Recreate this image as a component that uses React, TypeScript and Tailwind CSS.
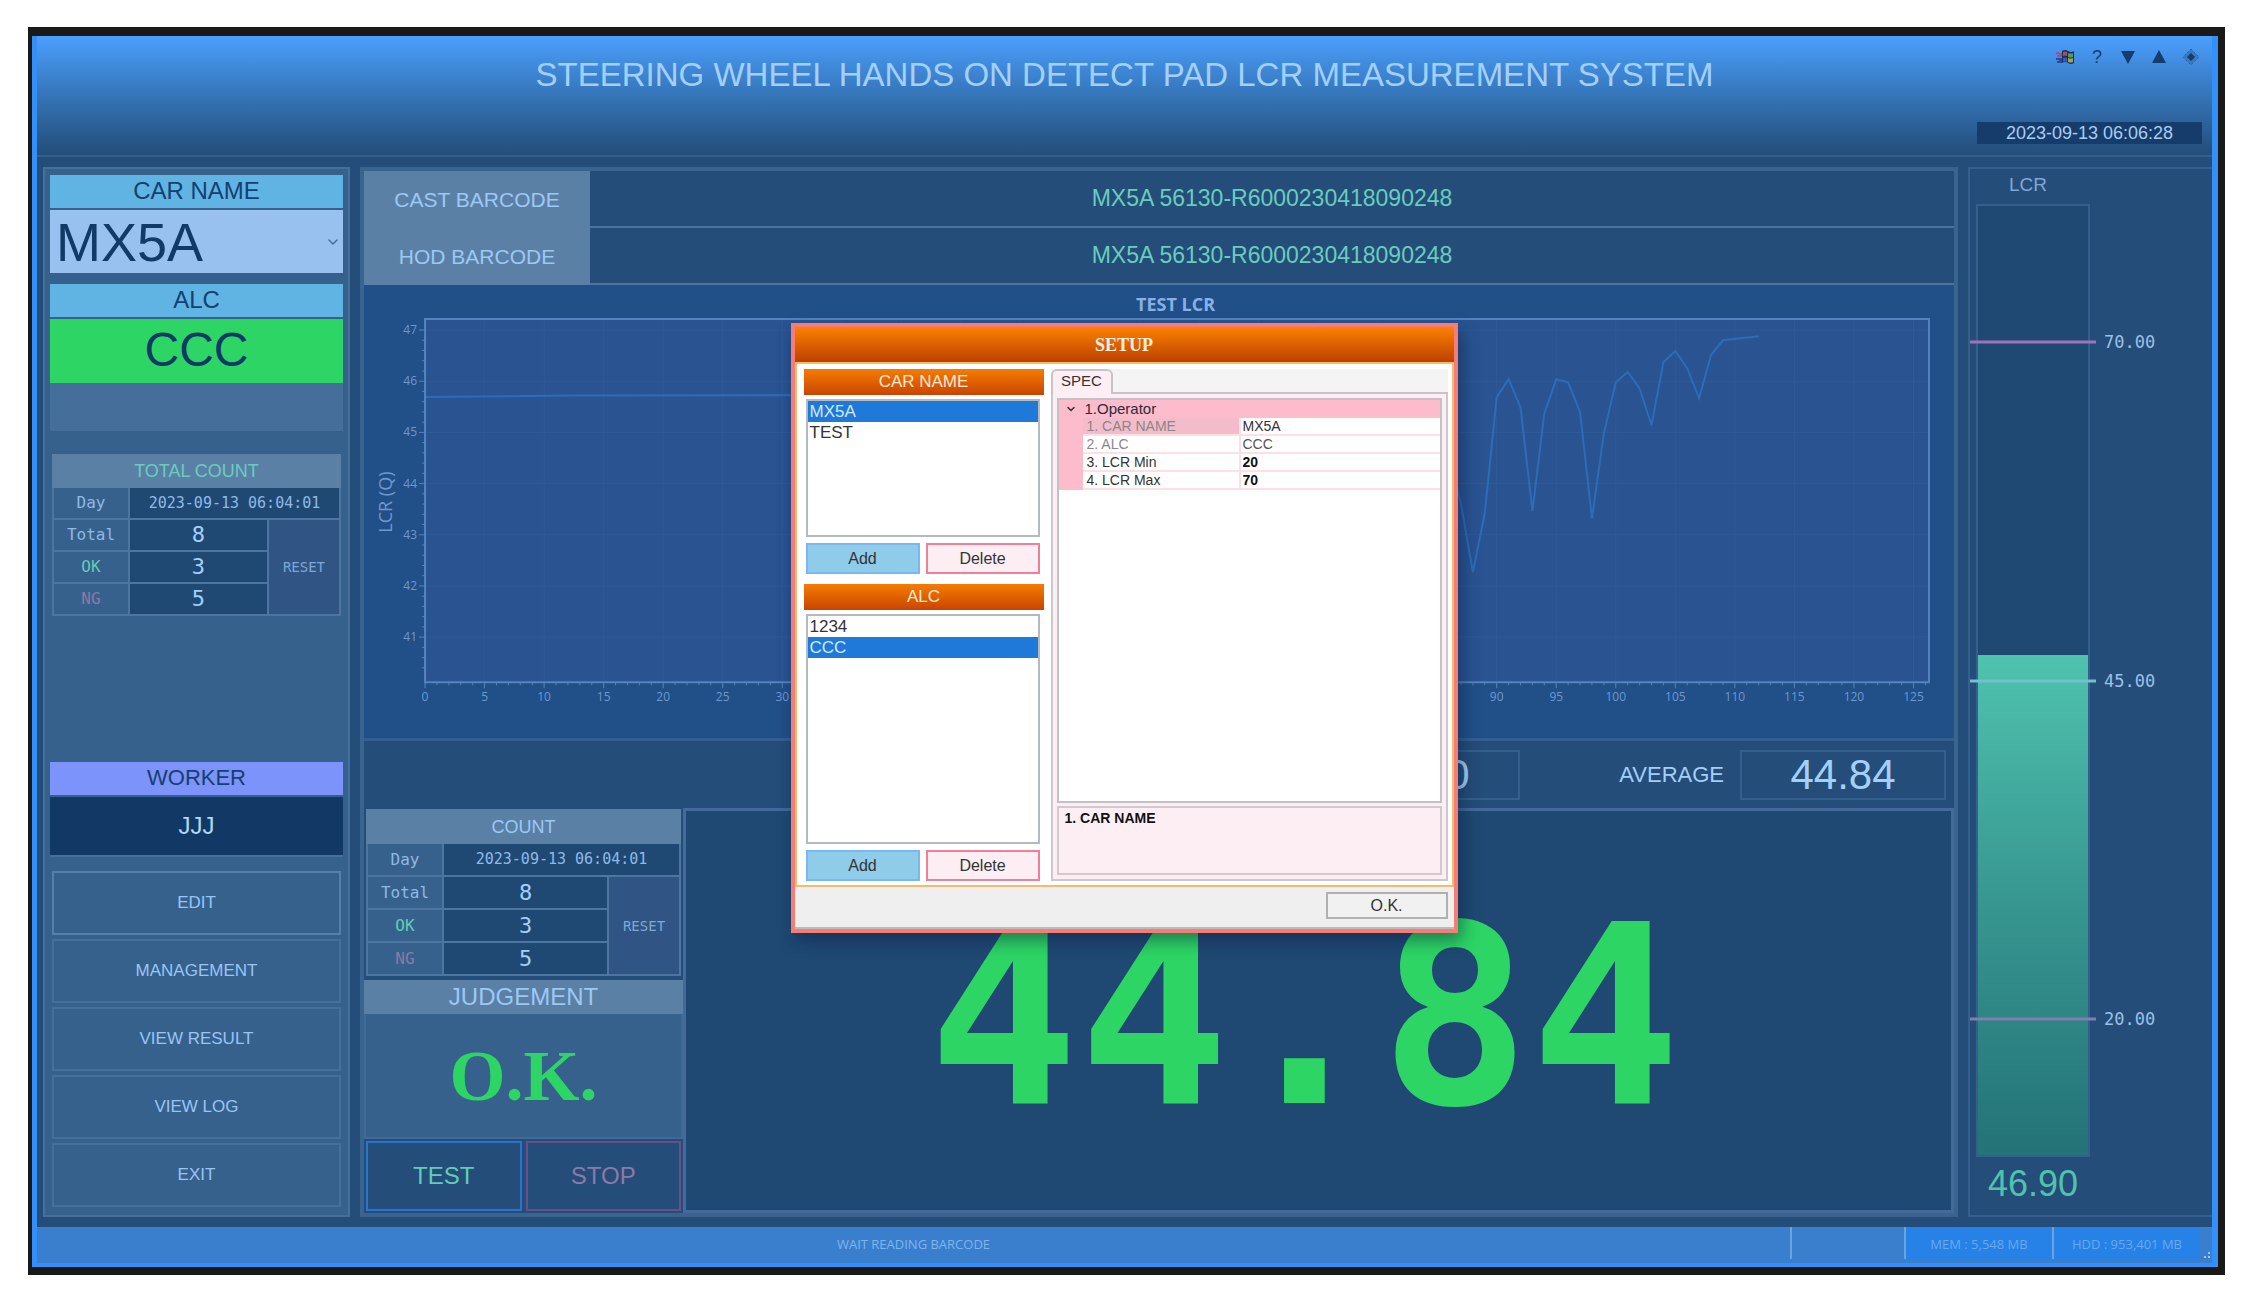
import { FC, ReactNode, useState } from "react";
import { ChevronDown } from "lucide-react";
import { clsx } from "clsx";

// LCR samples: [index, value]
const samples: [number, number][] = [
  [0, 45.69], [12, 45.72], [40, 45.73], [84, 45.73], [86, 44.6], [87, 43.6],
  [88, 42.27], [89, 43.42], [90, 45.69], [91, 46.04], [92, 45.49], [93, 43.46],
  [94, 45.37], [95, 46.04], [96, 45.98], [97, 45.39], [98, 43.32], [99, 44.98],
  [100, 45.98], [101, 46.18], [102, 45.86], [103, 45.14], [104, 46.37],
  [105, 46.59], [106, 46.25], [107, 45.67], [108, 46.51], [109, 46.8], [112, 46.88],
];

const plot = { left: 61, right: 1564, top: 32, bottom: 395 };
const xAt = (n: number) => plot.left + n * 11.9;
const yAt = (v: number) => 43 + (47 - v) * 51.15;

const steps = (from: number, to: number, by: number) => {
  const out: number[] = [];
  for (let i = from; i <= to; i += by) out.push(i);
  return out;
};

/** Line chart of the running test */
const Chart: FC = () => (
  <svg viewBox="0 0 1589 451" className="block w-full h-auto font-['Open_Sans',sans-serif]">
    <text x="811" y="24" fontSize="18" fontWeight="700" fill="#86b0e6" textAnchor="middle">
      TEST LCR
    </text>
    <rect x={plot.left} y={plot.top} width={plot.right - plot.left} height={plot.bottom - plot.top} fill="#295391" />
    {/* Grid */}
    {steps(5, 125, 5).map((n) => (
      <line key={n} x1={xAt(n)} x2={xAt(n)} y1={plot.top} y2={plot.bottom} stroke="#2e5a97" />
    ))}
    {steps(41, 47, 1).map((v) => (
      <line key={v} x1={plot.left} x2={plot.right} y1={yAt(v)} y2={yAt(v)} stroke="#2e5a97" />
    ))}
    <polyline
      points={samples.map(([n, v]) => `${xAt(n)},${yAt(v)}`).join(" ")}
      fill="none"
      stroke="#2d6cb8"
      strokeWidth="2"
    />
    <rect
      x={plot.left}
      y={plot.top}
      width={plot.right - plot.left}
      height={plot.bottom - plot.top}
      fill="none"
      stroke="#5583bf"
      strokeWidth="2"
    />
    {/* Ticks */}
    {steps(0, 126, 1).map((n) => (
      <line key={n} x1={xAt(n)} x2={xAt(n)} y1={plot.bottom} y2={plot.bottom + (n % 5 ? 3 : 6)} stroke="#5583bf" />
    ))}
    {steps(0, 33, 1).map((i) => (
      <line
        key={i}
        x1={plot.left - (i % 5 ? 3 : 6)}
        x2={plot.left}
        y1={yAt(47 - i / 5)}
        y2={yAt(47 - i / 5)}
        stroke="#5583bf"
      />
    ))}
    {steps(0, 125, 5).map((n) => (
      <text key={n} x={xAt(n)} y="414" fontSize="12" fill="#6f98cf" textAnchor="middle">
        {n}
      </text>
    ))}
    {steps(41, 47, 1).map((v) => (
      <text key={v} x="53" y={yAt(v) + 4} fontSize="12" fill="#6f98cf" textAnchor="end">
        {v}
      </text>
    ))}
    <text transform="translate(28 215) rotate(-90)" fontSize="18" fill="#6f98cf" textAnchor="middle">
      LCR (Q)
    </text>
  </svg>
);

/** Day / total / OK / NG counters with a reset button */
const CountTable: FC<{ title: string; titleClass: string; rowClass: string }> = ({
  title,
  titleClass,
  rowClass,
}) => {
  const rows = [
    { label: "Total", value: 8, color: "text-[#8fb9e6]" },
    { label: "OK", value: 3, color: "text-[#62cdb5]" },
    { label: "NG", value: 5, color: "text-[#8c79a8]" },
  ];
  return (
    <table className="w-full table-fixed border-collapse bg-[#37618d] font-['DejaVu_Sans_Mono',monospace] text-center leading-none">
      <colgroup>
        <col className="w-[76px]" />
        <col />
        <col className="w-[72px]" />
      </colgroup>
      <thead>
        <tr className={rowClass}>
          <th
            colSpan={3}
            className={clsx(
              "border-2 border-[#5b80a6] bg-[#5b80a6] p-0 font-['Liberation_Sans',sans-serif] text-lg leading-none font-normal",
              titleClass,
            )}
          >
            {title}
          </th>
        </tr>
      </thead>
      <tbody>
        <tr className={rowClass}>
          <th className="border-2 border-[#4c759f] p-0 text-base leading-none font-normal text-[#8fb9e6]">Day</th>
          <td colSpan={2} className="border-2 border-[#4c759f] bg-[#1f4973] p-0 text-[15px] text-[#8fb9e6]">
            2023-09-13 06:04:01
          </td>
        </tr>
        {rows.map((row, i) => (
          <tr className={rowClass} key={row.label}>
            <th className={clsx("border-2 border-[#4c759f] p-0 text-base leading-none font-normal", row.color)}>
              {row.label}
            </th>
            <td className="border-2 border-[#4c759f] bg-[#1f4973] p-0 text-[22px] text-[#a3cffa]">{row.value}</td>
            {i === 0 && (
              <td rowSpan={3} className="border-2 border-[#4c759f] bg-[#305584] p-0">
                <button type="button" className="w-full text-sm text-[#7fa8d6]">
                  RESET
                </button>
              </td>
            )}
          </tr>
        ))}
      </tbody>
    </table>
  );
};

const menu = ["EDIT", "MANAGEMENT", "VIEW RESULT", "VIEW LOG", "EXIT"];

const Sidebar: FC = () => (
  <aside className="flex w-[307px] shrink-0 flex-col border-2 border-[#44709b] bg-[#37618d] px-[5px] pt-1.5 pb-2">
    <label htmlFor="car" className="block h-[33px] bg-[#60b4e3] text-center text-2xl leading-8 text-[#15406f]">
      CAR NAME
    </label>
    <div className="relative mt-0.5">
      <select
        id="car"
        className="block h-[63px] w-full appearance-none bg-[#98c1ef] px-1.5 text-[54px] leading-none text-[#123a66]"
      >
        <option>MX5A</option>
        <option>TEST</option>
      </select>
      <ChevronDown className="pointer-events-none absolute right-0.5 top-6 size-4 text-[#40699c]" strokeWidth={2} />
    </div>

    <div className="mt-[11px] h-[33px] bg-[#60b4e3] text-center text-2xl leading-8 text-[#15406f]">ALC</div>
    <div className="mt-0.5 h-16 bg-[#2dd664] text-center text-5xl leading-[62px] text-[#0f3a66]">CCC</div>
    <div className="h-12 border-2 border-t-0 border-[#44709b] bg-[#456f9a]"></div>

    <div className="mx-0.5 mt-[23px]">
      <CountTable title="TOTAL COUNT" titleClass="text-[#68cdbd]" rowClass="h-8" />
    </div>

    <div className="min-h-6 flex-1"></div>

    <div className="h-[33px] bg-[#7b93fa] text-center text-[22px] leading-8 text-[#15406f]">WORKER</div>
    <div className="mt-0.5 h-[60px] border-b-2 border-[#44709b] bg-[#123966] text-center text-2xl leading-[58px] text-[#b5d8fa]">
      JJJ
    </div>

    <nav className="mx-0.5 mt-3.5 flex flex-col gap-1">
      {menu.map((item, i) => (
        <button
          type="button"
          key={item}
          className={clsx("h-16 border-2 text-[17px] text-[#98c5f4]", i === 0 ? "border-[#5480aa]" : "border-[#44709b]")}
        >
          {item}
        </button>
      ))}
    </nav>
  </aside>
);

const Barcode: FC<{ label: string; value: string }> = ({ label, value }) => (
  <div className="flex h-[57px] items-stretch">
    <div className="flex w-[226px] items-center justify-center bg-[#5b80a6] text-[21px] text-[#9cc8f5]">{label}</div>
    <div className="flex flex-1 items-center justify-center border-b-2 border-[#4d74a1] text-[23px] text-[#68cdbd]">
      {value}
    </div>
  </div>
);

const Main: FC = () => (
  <main className="flex min-w-0 flex-1 flex-col border-4 border-[#3a6490] bg-[#244d79]">
    <Barcode label="CAST BARCODE" value="MX5A 56130-R6000230418090248" />
    <Barcode label="HOD BARCODE" value="MX5A 56130-R6000230418090248" />
    <div className="border-b-[3px] border-[#355f8e] bg-[#214f88] pt-0.5">
      <Chart />
    </div>

    <div className="flex h-[67px] items-center justify-end pr-2 text-[42px] leading-none text-[#a3cffa]">
      <div className="flex h-[50px] w-[206px] items-center justify-center border-2 border-[#355f8e]">46.90</div>
      <div className="w-[220px] pr-4 text-right text-[22px]">AVERAGE</div>
      <div className="flex h-[50px] w-[206px] items-center justify-center border-2 border-[#355f8e]">44.84</div>
    </div>

    <div className="flex min-h-[404px] flex-1">
      <div className="flex w-[319px] shrink-0 flex-col">
        <div className="mx-0.5 mt-px">
          <CountTable title="COUNT" titleClass="text-[#9cc8f5]" rowClass="h-[33px]" />
        </div>
        <div className="mt-1 h-[34px] bg-[#5b80a6] text-center text-2xl leading-[34px] text-[#9cc8f5]">JUDGEMENT</div>
        <div className="flex flex-1 items-center justify-center border-2 border-t-0 border-[#416b97] bg-[#37618d] font-['Liberation_Serif',serif] text-[72px] leading-none font-bold text-[#2dd664]">
          O.K.
        </div>
        <div className="flex h-[74px] gap-1 px-0.5 py-0.5 text-2xl">
          <button type="button" className="flex-1 border-2 border-[#2a73cf] text-[#62cdb5]">
            TEST
          </button>
          <button type="button" className="flex-1 border-2 border-[#66508a] text-[#8c79a8]">
            STOP
          </button>
        </div>
      </div>
      <div className="flex flex-1 items-center justify-center border-[3px] border-[#44699a] bg-[#1f4973] pt-3 pr-7 font-['DejaVu_Sans_Mono',monospace] text-[250px] leading-none font-bold text-[#2dd664]">
        44.84
      </div>
    </div>
  </main>
);

const levels = [
  { value: 70, color: "bg-[#a073b8]" },
  { value: 45, color: "bg-[#72c0cf]" },
  { value: 20, color: "bg-[#8080b0]" },
];

// The gauge runs from 10 at the bottom to 80 at the top
const fromTop = (value: number) => `${((80 - value) / 70) * 100}%`;

const Gauge: FC = () => (
  <section className="flex w-[244px] shrink-0 flex-col border-2 border-r-0 border-[#355f8e] bg-[#244d79] pl-1.5">
    <h2 className="h-[35px] w-[104px] text-center text-[19px] leading-8 text-[#7fa8d6]">LCR</h2>
    <div className="relative w-[114px] flex-1 border-2 border-[#355f8e] bg-[#1f4973]">
      <div
        className="absolute inset-x-0 bottom-0 bg-linear-to-b from-[#4fc3ae] via-[#379690] to-[#237377]"
        style={{ top: fromTop(46.9) }}
      />
      {levels.map(({ value, color }) => (
        <div
          key={value}
          className="absolute -left-2 flex -translate-y-1/2 items-center gap-2"
          style={{ top: fromTop(value) }}
        >
          <span className={clsx("h-[3px] w-[126px]", color)}></span>
          <span className="font-['DejaVu_Sans_Mono',monospace] text-[17px] leading-none text-[#9cc0e6]">
            {value.toFixed(2)}
          </span>
        </div>
      ))}
    </div>
    <div className="h-[58px] w-[114px] text-center text-4xl leading-[54px] text-[#4fc3ae]">46.90</div>
  </section>
);

const ListBox: FC<{ title: string; items: string[]; initial: string; heightClass: string }> = ({
  title,
  items,
  initial,
  heightClass,
}) => {
  const [selected, setSelected] = useState(initial);
  return (
    <div className="w-60">
      <h3 className="h-[26px] bg-linear-to-b from-[#f57c00] to-[#c94400] text-center text-[17px] leading-[26px] text-[#fbe9d8]">
        {title}
      </h3>
      <ul className={clsx("mr-1 ml-0.5 mt-1 border-2 border-[#b4bac2] bg-white", heightClass)}>
        {items.map((item) => (
          <li key={item}>
            <button
              type="button"
              onClick={() => setSelected(item)}
              className={clsx(
                "block h-[21px] w-full px-0.5 text-left text-[17px] leading-[21px]",
                item === selected ? "bg-[#1f79d9] text-[#d5e8fa]" : "text-[#333]",
              )}
            >
              {item}
            </button>
          </li>
        ))}
      </ul>
      <div className="mr-1 ml-0.5 mt-1.5 flex gap-1.5 text-base text-[#333]">
        <button type="button" className="h-[31px] flex-1 border-2 border-[#7ab8f5] bg-[#8fccea]">
          Add
        </button>
        <button type="button" className="h-[31px] flex-1 border-2 border-[#f07f98] bg-[#fdeef4]">
          Delete
        </button>
      </div>
    </div>
  );
};

const Property: FC<{ name: string; children: ReactNode; muted?: boolean; active?: boolean }> = ({
  name,
  children,
  muted,
  active,
}) => (
  <tr className="h-[18px]">
    <td className="bg-[#fdbccb] p-0"></td>
    <th
      className={clsx(
        "border-r-2 border-b-2 border-[#fde0e6] p-0 pl-1 text-left font-normal",
        muted ? "text-[#8c8589]" : "text-[#333]",
        active && "bg-[#f3bccb]",
      )}
    >
      {name}
    </th>
    <td className="border-b-2 border-[#fde0e6] p-0 pl-0.5">{children}</td>
  </tr>
);

const SetupDialog: FC = () => (
  <div
    role="dialog"
    aria-label="SETUP"
    className="flex w-[667px] flex-col border-4 border-[#f77c75] bg-[#efefef] shadow-[4px_8px_16px_rgba(8,24,56,0.45)]"
  >
    <h2 className="h-[35px] bg-linear-to-b from-[#fb8200] to-[#bd4000] text-center font-['Liberation_Serif',serif] text-lg leading-9 font-bold text-[#fdeee0]">
      SETUP
    </h2>
    <div className="flex gap-[7px] border-2 border-[#f3bb6c] bg-white pt-[5px] pr-1 pb-1 pl-[7px]">
      <div className="flex flex-col gap-2.5">
        <ListBox title="CAR NAME" items={["MX5A", "TEST"]} initial="MX5A" heightClass="h-[138px]" />
        <ListBox title="ALC" items={["1234", "CCC"]} initial="CCC" heightClass="h-[230px]" />
      </div>
      <div className="flex flex-1 flex-col">
        <div className="flex bg-[#f4f4f4]">
          <button
            type="button"
            role="tab"
            aria-selected
            className="h-[25px] w-[62px] rounded-t-md border-2 border-b-0 border-[#c9c3c8] bg-[#fdeef4] pb-1 text-[15px] leading-none text-[#333]"
          >
            SPEC
          </button>
          <div className="flex-1 border-b-2 border-[#c9c3c8]"></div>
        </div>
        <div className="flex flex-1 flex-col gap-[3px] border-2 border-t-0 border-[#c9c9cf] bg-[#fdeef4] p-1">
          <div className="flex-1 border-2 border-[#c4c0c6] bg-white">
            <table className="w-full table-fixed border-separate border-spacing-0 text-sm leading-4">
              <colgroup>
                <col className="w-6" />
                <col className="w-[158px]" />
                <col />
              </colgroup>
              <tbody>
                <tr className="h-[18px] bg-[#fdbccb]">
                  <td className="p-0">
                    <ChevronDown className="mx-auto size-3 text-[#333]" strokeWidth={3} />
                  </td>
                  <th colSpan={2} className="p-0 pl-0.5 text-left text-[15px] font-normal text-[#2b2b3b]">
                    1.Operator
                  </th>
                </tr>
                <Property name="1. CAR NAME" muted active>
                  <span className="text-[#333]">MX5A</span>
                </Property>
                <Property name="2. ALC" muted>
                  <span className="text-[#555]">CCC</span>
                </Property>
                <Property name="3. LCR Min">
                  <input aria-label="LCR Min" defaultValue="20" className="block h-4 w-full font-bold text-[#111]" />
                </Property>
                <Property name="4. LCR Max">
                  <input aria-label="LCR Max" defaultValue="70" className="block h-4 w-full font-bold text-[#111]" />
                </Property>
              </tbody>
            </table>
          </div>
          <div className="h-[69px] border-2 border-[#d2c9cf] px-1.5 text-sm leading-5 font-bold text-[#111]">
            1. CAR NAME
          </div>
        </div>
      </div>
    </div>
    <div className="flex h-[42px] justify-end border-b-2 border-[#b9bcbc] pt-[5px] pr-1.5">
      <button type="button" className="h-[27px] w-[122px] border-2 border-[#b0b0b0] bg-[#f1f1f1] text-base leading-none text-[#333]">
        O.K.
      </button>
    </div>
  </div>
);

const WindowIcons: FC = () => (
  <div className="flex items-center gap-[15px] text-[#153c6b]">
    <button type="button" aria-label="Windows">
      <svg viewBox="0 0 18 16" className="h-4 w-[18px]">
        <path d="M6 2q3-2 6 0t6 0v12q-3 2-6 0t-6 0z" fill="#173258" />
        <path d="M7 3q2-1 4 0v4q-2-1-4 0z" fill="#b8466c" />
        <path d="M12 4q3 1 5 0v4q-2 1-5 0z" fill="#4f9e50" />
        <path d="M7 9q2-1 4 0v4q-2-1-4 0z" fill="#3a55c4" />
        <path d="M12 9q3 1 5 0v4q-2 1-5 0z" fill="#a8a04c" />
        <path d="M0 3h3v2H0zM3 4h3v2H3zM1 6h5v2H1z" fill="#a0507c" />
        <path d="M0 9h3v2H0zM3 9h3v3H3zM1 12h5v2H1z" fill="#2c46a8" />
      </svg>
    </button>
    <button type="button" className="w-4 text-lg leading-none">
      ?
    </button>
    <button type="button" aria-label="Minimize">
      <svg viewBox="0 0 16 16" className="w-4">
        <path d="M1 2h14L8 15z" fill="currentColor" />
      </svg>
    </button>
    <button type="button" aria-label="Maximize">
      <svg viewBox="0 0 16 16" className="w-4">
        <path d="M1 14h14L8 1z" fill="currentColor" />
      </svg>
    </button>
    <button type="button" aria-label="Close">
      <svg viewBox="0 0 18 18" className="w-[18px]">
        <path d="M9 1l8 8-8 8-8-8z" fill="#3a78bf" />
        <path d="M9 1l8 8-8 8-8-8z" fill="none" stroke="#2c62a3" strokeDasharray="2 2" />
        <path d="M9 5l4 4-4 4-4-4z" fill="currentColor" />
      </svg>
    </button>
  </div>
);

const App = () => {
  return (
    <div className="flex min-h-screen flex-col bg-white pt-[27px] pr-5 pb-5 pl-7 font-['Liberation_Sans',Arial,sans-serif]">
      <div className="relative flex flex-1 flex-col border-t-[9px] border-r-[7px] border-b-8 border-l-4 border-[#191917]">
        <div className="flex flex-1 flex-col border-r-[6px] border-b-4 border-l-[5px] border-[#3390fb] bg-[#244d79]">
          {/* Title bar */}
          <header className="grid h-[121px] grid-cols-[1fr_auto_1fr] border-b-2 border-[#355f8e] bg-linear-to-b from-[#4b9fff] via-[#3575b8] to-[#244d79]">
            <div></div>
            <h1 className="pt-[21px] text-[33px] leading-9 text-[#a3d0fb]">
              STEERING WHEEL HANDS ON DETECT PAD LCR MEASUREMENT SYSTEM
            </h1>
            <div className="flex flex-col items-end justify-between pt-3 pr-2.5 pb-[11px]">
              <div className="pr-0.5">
                <WindowIcons />
              </div>
              <time className="h-[22px] w-[225px] bg-[#163c6c] text-center text-lg leading-[22px] text-[#a9cdf2]">
                2023-09-13 06:06:28
              </time>
            </div>
          </header>

          <div className="flex flex-1 gap-2.5 py-2.5 pl-1.5">
            <Sidebar />
            <Main />
            <Gauge />
          </div>

          {/* Status bar */}
          <footer className="flex h-9 bg-[#3a7fcd] font-['Open_Sans',sans-serif] text-[13px] leading-[34px] text-[#7fb4ec]">
            <div className="mb-1 flex-1 border-r-2 border-[#6ba3e0] text-center">WAIT READING BARCODE</div>
            <div className="mb-1 w-[114px] border-r-2 border-[#6ba3e0]"></div>
            <div className="mb-1 w-[148px] border-r-2 border-[#6ba3e0] bg-[#2682e6] text-center text-[#68a9ef]">
              MEM : 5,548 MB
            </div>
            <div className="mb-1 w-[146px] bg-[#2682e6] text-center text-[#68a9ef]">HDD : 953,401 MB</div>
            <svg viewBox="0 0 12 36" className="w-3">
              <path d="M8 25h2v2H8zM8 29h2v2H8zM4 29h2v2H4z" fill="#9cc8f5" />
            </svg>
          </footer>
        </div>

        <div className="absolute inset-x-0 top-[287px] flex justify-center pr-0.5">
          <SetupDialog />
        </div>
      </div>
    </div>
  );
};

export default App;
